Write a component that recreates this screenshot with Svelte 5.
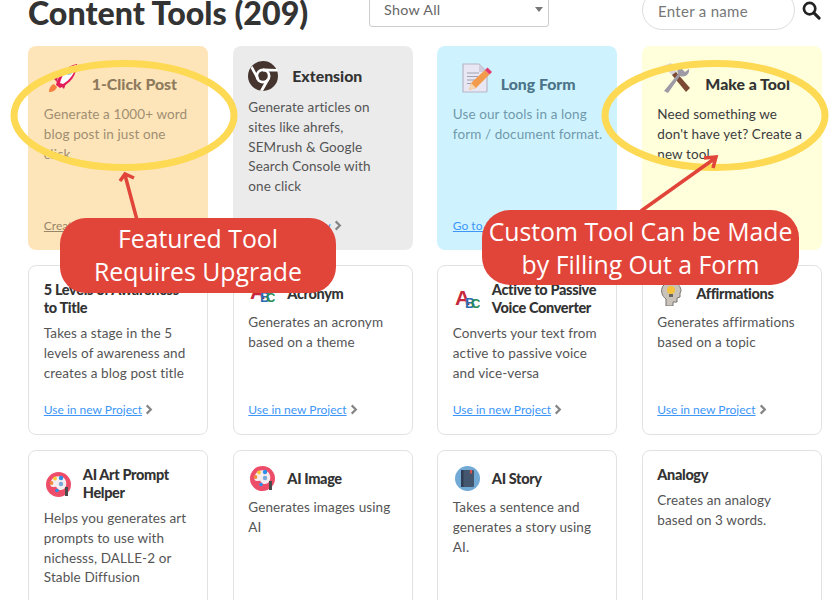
<script>
  const row1 = [
    { icon: 'rocket', title: '1-Click Post', desc: 'Generate a 1000+ word blog post in just one click', link: 'Create Now', tone: 'orange', tall: true },
    { icon: 'chrome', title: 'Extension', desc: 'Generate articles on sites like ahrefs, SEMrush & Google Search Console with one click', link: 'Download Now', tone: 'grey' },
    { icon: 'doc', title: 'Long Form', desc: 'Use our tools in a long form / document format.', link: 'Go to Long Form', tone: 'blue', tall: true },
    { icon: 'tools', title: 'Make a Tool', desc: "Need something we don't have yet? Create a new tool", link: 'Create a Tool', tone: 'yellow', tall: true }
  ];
  const rest = [
    { title: '5 Levels of Awareness to Title', desc: 'Takes a stage in the 5 levels of awareness and creates a blog post title' },
    { icon: 'abc', title: 'Acronym', desc: 'Generates an acronym based on a theme' },
    { icon: 'abc', title: 'Active to Passive Voice Converter', desc: 'Converts your text from active to passive voice and vice-versa' },
    { icon: 'head', title: 'Affirmations', desc: 'Generates affirmations based on a topic' },
    { icon: 'palette', title: 'AI Art Prompt Helper', desc: 'Helps you generates art prompts to use with nichesss, DALLE-2 or Stable Diffusion' },
    { icon: 'palette', title: 'AI Image', desc: 'Generates images using AI' },
    { icon: 'book', title: 'AI Story', desc: 'Takes a sentence and generates a story using AI.' },
    { title: 'Analogy', desc: 'Creates an analogy based on 3 words.' }
  ];
</script>

{#snippet glyph(name)}
  {#if name === 'rocket'}
    <svg class="ic big" viewBox="0 0 30 30">
      <path d="M1 29c0-4 2-7 5-8l3 3c-1 3-4 5-8 5z" fill="#f5813f"/>
      <path d="M5 15l5-2-1 6zM16 26l2-6-6 2z" fill="#d81e5b"/>
      <path d="M8 22C10 12 18 3 29 1c0 11-7 20-17 24z" fill="#e21b5a"/>
      <path d="M12 20C14 11 20 5 28 2c-1 8-6 15-13 19z" fill="#fff"/>
      <circle cx="21" cy="9" r="3" fill="#8fd0e8"/>
    </svg>
  {:else if name === 'chrome'}
    <svg class="ic big" viewBox="0 0 30 30">
      <circle cx="15" cy="15" r="15" fill="#45352e"/>
      <circle cx="15" cy="15" r="7.5" fill="#fff"/>
      <circle cx="15" cy="15" r="4.8" fill="#45352e"/>
      <path d="M2.5 7L9 18.5 11 17 4.5 5zM15 7.5L29 8l.6 2.5H15zM21.5 18.5L15 30l-3-.4 6.5-11.6z" fill="#fff"/>
    </svg>
  {:else if name === 'doc'}
    <svg class="ic big doc" viewBox="0 0 30 30">
      <path d="M1 1h16l8 8v19a1 1 0 0 1-1 1H1z" fill="#ece6f3" stroke="#b5b0c4" stroke-width="1.2"/>
      <path d="M17 1v8h8z" fill="#cfc8da"/>
      <path d="M5 10h12M5 13.500h15M5 17h11M5 20.500h7" stroke="#9c98a8" stroke-width="1.2"/>
      <path d="M7 27l2-7L23 7l4.500 4.500L14 25z" fill="#f6923a"/>
      <path d="M7 27l2-7 5 5z" fill="#fbd3a8"/>
      <path d="M23 7l2.500-2.500 4.500 4.500L27.500 11.500z" fill="#e8275f"/>
    </svg>
  {:else if name === 'tools'}
    <svg class="ic big" viewBox="0 0 30 30">
      <path d="M2 3l8-3 6 9-4 4z" fill="#d8d4da"/>
      <path d="M11 12l4-3 14 16-4 4z" fill="#7c4a32"/>
      <path d="M3 28L17 11c-2-5 2-10 7-9l-3 4 3 3 4-3c1 5-4 9-9 7L7 30z" fill="#9e9aa6"/>
    </svg>
  {:else if name === 'abc'}
    <svg class="ic" viewBox="0 0 25 25">
      <text class="abc a" x="0" y="18">A</text>
      <text class="abc b" x="10" y="21">B</text>
      <text class="abc c" x="16" y="21">C</text>
    </svg>
  {:else if name === 'head'}
    <svg class="ic" viewBox="0 0 25 25">
      <path d="M7 25V18C3 15 2 11 3 7c2-5 7-7 11-6 5 1 8 5 8 9l-1 2 0 4-3 1v4l-4 0v4z" fill="#c9c3bb" stroke="#77736d" stroke-width="1"/>
      <circle cx="12" cy="9" r="4" fill="#f4c23c"/>
      <path d="M10 13h4v3h-4z" fill="#6c6660"/>
    </svg>
  {:else if name === 'palette'}
    <svg class="ic" viewBox="0 0 25 25">
      <circle cx="12.500" cy="12.500" r="12.500" fill="#ee4d6a"/>
      <path d="M5 9c2-5 9-6 13-3 3 3 3 8 0 11-3 2-6 1-7-1-1-2-2-1-4-1-3 0-3-3-2-6z" fill="#f4eef0"/>
      <circle cx="9" cy="6.500" r="1.900" fill="#f8cd3a"/>
      <circle cx="15" cy="6" r="2.200" fill="#2b8fe8"/>
      <circle cx="5.500" cy="11" r="1.900" fill="#f08a3c"/>
      <circle cx="15" cy="12" r="2.200" fill="#7aa9dc"/>
      <circle cx="11" cy="18.500" r="1.800" fill="#2b8fe8"/>
      <rect x="19" y="15" width="3" height="9" fill="#4a4a4a"/>
    </svg>
  {:else if name === 'book'}
    <svg class="ic" viewBox="0 0 25 25">
      <circle cx="12.500" cy="12.500" r="12.500" fill="#72aad6"/>
      <rect x="6" y="4" width="13" height="17" rx="1" fill="#45566f"/>
      <rect x="6" y="4" width="2.500" height="17" fill="#2f3e55"/>
      <rect x="15" y="4" width="2" height="3.500" fill="#d9534f"/>
    </svg>
  {/if}
{/snippet}

{#snippet chevron()}
  <svg class="chev" viewBox="0 0 8 12"><path d="M1.500 1.500L6 6l-4.500 4.500" fill="none" stroke="#858585" stroke-width="2.400"/></svg>
{/snippet}

<div class="page">
  <header class="top">
    <h1>Content Tools (209)</h1>
    <div class="select">Show All<span class="caret"></span></div>
    <div class="search">
      <input placeholder="Enter a name" />
      <svg class="glass" viewBox="0 0 20 20"><circle cx="8" cy="8" r="6" fill="none" stroke="#222" stroke-width="2.800"/><path d="M12.500 12.500L18 18" stroke="#222" stroke-width="3.200" stroke-linecap="round"/></svg>
    </div>
  </header>

  <section class="grid">
    {#each row1 as c}
      <article class="card feature {c.tone}">
        <div class="head" class:tall={c.tall}>
          <span class="iconbox">{@render glyph(c.icon)}</span>
          <h2>{c.title}</h2>
        </div>
        <p>{c.desc}</p>
        <div class="foot"><a href="#top">{c.link}</a>{@render chevron()}</div>
      </article>
    {/each}
    {#each rest as c}
      <article class="card">
        <div class="head">
          {#if c.icon}<span class="iconbox">{@render glyph(c.icon)}</span>{/if}
          <h2>{c.title}</h2>
        </div>
        <p>{c.desc}</p>
        <div class="foot"><a href="#top">Use in new Project</a>{@render chevron()}</div>
      </article>
    {/each}
  </section>

  <svg class="marks" viewBox="0 0 840 600">
    <ellipse cx="124" cy="115.500" rx="110" ry="52" class="ring"/>
    <ellipse cx="715" cy="115.500" rx="110" ry="52" class="ring"/>
    <path class="arrow" d="M137 220L125 175M120 181L125 174L134 178"/>
    <path class="arrow" d="M641 211L714 159M704 158L716 157L713 168"/>
  </svg>
  <div class="bubble one">Featured Tool<br/>Requires Upgrade</div>
  <div class="bubble two">Custom Tool Can be Made<br/>by Filling Out a Form</div>
</div>

<style>
  :global(body) { margin: 0; background: #fff; }
  .page {
    position: relative; width: 840px; height: 600px; overflow: hidden;
    font-family: Lato, "Noto Sans", sans-serif; color: #555;
  }
  .top { display: flex; align-items: flex-start; height: 46px; padding-left: 28px; }
  h1 {
    margin: -6px 0 0; width: 341px; flex: none; font-size: 32.200px; line-height: 38px;
    font-weight: 900; color: #333; white-space: nowrap;
  }
  .select {
    position: relative; box-sizing: border-box; width: 180px; height: 38px; margin-top: -11px;
    padding: 10px 14px 0; border: 1px solid #ccc; border-radius: 3px;
    font-size: 14.300px; line-height: 20px; color: #666; letter-spacing: .3px;
  }
  .caret {
    position: absolute; right: 5px; top: 17px; border: 4px solid transparent;
    border-top: 5px solid #777; border-bottom: 0;
  }
  .search { display: flex; align-items: center; margin-left: 93px; margin-top: -10px; }
  input {
    box-sizing: border-box; width: 153px; height: 40px; padding: 1px 15px 0; border: 1px solid #ddd;
    border-radius: 20px; font: 15px/20px Lato, sans-serif; letter-spacing: .3px; background: #fff; outline: none;
  }
  input::placeholder { color: #777; opacity: 1; }
  .glass { width: 19px; height: 19px; margin-left: 7px; }

  .grid {
    display: grid; grid-template-columns: repeat(4, 180px); grid-template-rows: 204px 170px 190px;
    column-gap: 24.500px; row-gap: 15px; padding-left: 28.300px;
  }
  .card {
    box-sizing: border-box; display: flex; flex-direction: column; padding: 15px 14.500px 16px;
    border: 1px solid #e2e2e2; border-radius: 8px; background: #fff;
  }
  .feature { border: 0; padding-left: 15.500px; padding-right: 15px; }
  .orange { background: #fde5b9; color: #a08e72; }
  .grey { background: #ebebeb; padding-right: 30px; }
  .blue { background: #cff3fe; color: #6f99ac; }
  .yellow { background: #ffffdc; color: #3c3c3c; }

  .head { display: flex; align-items: center; min-height: 18px; margin-bottom: 7px; }
  .head.tall { align-items: flex-end; height: 37px; padding-bottom: 5px; box-sizing: border-box; }
  .iconbox { flex: none; display: flex; width: 39px; padding-left: 2px; box-sizing: border-box; }
  .feature .iconbox { width: 44px; padding-left: 0; }
  .feature .head.tall .iconbox { width: 48px; padding-left: 4px; }
  .blue .head.tall .iconbox { padding-left: 9px; }
  .ic { display: block; width: 25px; height: 25px; }
  .ic.big { width: 30px; height: 30px; }
  .abc { font-family: "Liberation Sans", sans-serif; font-weight: 700; }
  .a { font-size: 21px; fill: #c8283c; }
  .b { font-size: 14px; fill: #2a6db4; }
  .c { font-size: 13px; fill: #2a8a58; }
  .doc { opacity: .9; }

  h2 {
    margin: 0; font-size: 14.500px; line-height: 18px; font-weight: 900; color: #333;
    letter-spacing: -.35px;
  }
  .feature h2 { font-size: 15.800px; letter-spacing: 0; }
  .orange h2 { color: #8e7a5c; }
  .blue h2 { color: #4b7389; }
  p { margin: 0; font-size: 13.500px; line-height: 19.800px; letter-spacing: .1px; color: inherit; }
  .blue p { margin-right: -6px; }
  .foot { margin-top: auto; display: flex; align-items: center; height: 18px; }
  a { font-size: 12px; color: #3d96f8; text-decoration: underline; }
  .orange a { color: #98866a; }
  .chev { width: 8px; height: 11px; margin-left: 3px; }

  .marks { position: absolute; inset: 0; width: 840px; height: 600px; pointer-events: none; }
  .ring { fill: none; stroke: #fdd954; stroke-width: 7; }
  .arrow { fill: none; stroke: #e1453a; stroke-width: 3.500; }
  .bubble {
    position: absolute; box-sizing: border-box; padding-top: 4px; white-space: nowrap;
    text-align: center; background: #e1453a; color: #fff; border-radius: 26px;
    font-family: "Open Sans", sans-serif; font-size: 24.800px; line-height: 33px;
  }
  .one { left: 60px; top: 218px; width: 276px; height: 75px; }
  .two { left: 482px; top: 210px; width: 317px; height: 75px; padding-top: 5px; border-radius: 28px; }
</style>
